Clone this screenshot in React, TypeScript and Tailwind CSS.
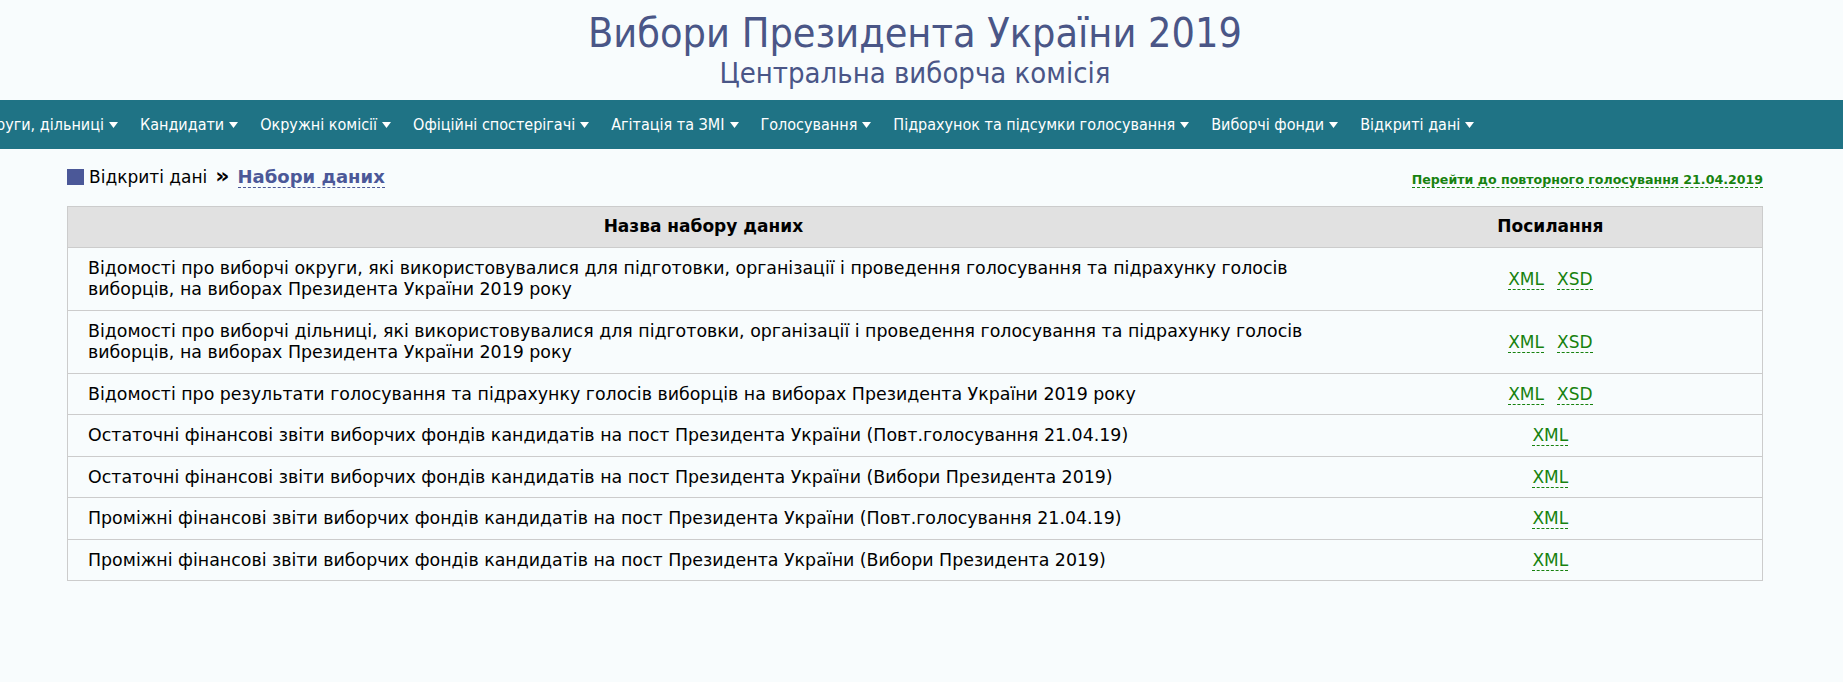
import React from 'react';

const navItems = [
  'Округи, дільниці',
  'Кандидати',
  'Окружні комісії',
  'Офіційні спостерігачі',
  'Агітація та ЗМІ',
  'Голосування',
  'Підрахунок та підсумки голосування',
  'Виборчі фонди',
  'Відкриті дані',
];

const rows: { title: string; links: string[] }[] = [
  {
    title:
      'Відомості про виборчі округи, які використовувалися для підготовки, організації і проведення голосування та підрахунку голосів виборців, на виборах Президента України 2019 року',
    links: ['XML', 'XSD'],
  },
  {
    title:
      'Відомості про виборчі дільниці, які використовувалися для підготовки, організації і проведення голосування та підрахунку голосів виборців, на виборах Президента України 2019 року',
    links: ['XML', 'XSD'],
  },
  {
    title: 'Відомості про результати голосування та підрахунку голосів виборців на виборах Президента України 2019 року',
    links: ['XML', 'XSD'],
  },
  {
    title: 'Остаточні фінансові звіти виборчих фондів кандидатів на пост Президента України (Повт.голосування 21.04.19)',
    links: ['XML'],
  },
  {
    title: 'Остаточні фінансові звіти виборчих фондів кандидатів на пост Президента України (Вибори Президента 2019)',
    links: ['XML'],
  },
  {
    title: 'Проміжні фінансові звіти виборчих фондів кандидатів на пост Президента України (Повт.голосування 21.04.19)',
    links: ['XML'],
  },
  {
    title: 'Проміжні фінансові звіти виборчих фондів кандидатів на пост Президента України (Вибори Президента 2019)',
    links: ['XML'],
  },
];

function Caret() {
  return (
    <svg width="9" height="6" viewBox="0 0 9 6" className="ml-[5px] mt-[1px]">
      <path d="M0 0 H9 L4.5 6 Z" fill="#ffffff" />
    </svg>
  );
}

export default function App() {
  return (
    <div className="min-h-[682px] w-full bg-[#f8fcfd] font-['DejaVu_Sans',Verdana,sans-serif] text-black">
      <div className="w-[1830px]">
        {/* Header */}
        <div className="flex flex-col items-center pt-[9px] h-[100px]">
          <h1 className="font-['DejaVu_Sans_Condensed',sans-serif] text-[41px] leading-[48px] text-[#4a5687]">
            Вибори Президента України 2019
          </h1>
          <h2 className="font-['DejaVu_Sans_Condensed',sans-serif] text-[29px] leading-[32px] text-[#4a5687]">
            Центральна виборча комісія
          </h2>
        </div>
      </div>

      {/* Nav */}
      <div className="h-[49px] bg-[#1f7385] overflow-hidden">
        <ul className="flex items-center h-full ml-[-24px] gap-[22px] font-['DejaVu_Sans_Condensed',sans-serif] text-[16px] text-white whitespace-nowrap">
          {navItems.map(item => (
            <li key={item} className="flex items-center">
              {item}
              <Caret />
            </li>
          ))}
        </ul>
      </div>

      <div className="w-[1830px] px-[67px]">
        {/* Breadcrumb */}
        <div className="flex items-end justify-between pt-[16px] pb-[17px]">
          <div className="flex items-center text-[17px] leading-[24px]">
            <span className="w-[17px] h-[16px] bg-[#4b5898] mr-[5px]" />
            <span>Відкриті дані</span>
            <span className="font-bold mx-[8px] text-[22px] leading-[22px] mb-[2px]">»</span>
            <span className="font-bold text-[18px] text-[#4b5898] border-b border-dashed border-[#4b5898] leading-[21px]">
              Набори даних
            </span>
          </div>
          <span className="font-bold text-[12.6px] leading-[15px] text-[#17820f] border-b border-dashed border-[#17820f] mb-[1px]">
            Перейти до повторного голосування 21.04.2019
          </span>
        </div>

        {/* Table */}
        <table className="w-full border-collapse border border-[#cccccc] text-[17.4px] leading-[21.5px]">
          <thead>
            <tr className="bg-[#e1e1e1]">
              <th className="w-3/4 py-[9px] font-bold text-[17px] text-center border-b border-[#cccccc]">Назва набору даних</th>
              <th className="w-1/4 py-[9px] font-bold text-[17px] text-center border-b border-[#cccccc]">Посилання</th>
            </tr>
          </thead>
          <tbody>
            {rows.map(row => (
              <tr key={row.title} className="border-b border-[#cccccc]">
                <td className="pt-[10px] pb-[9px] pl-[20px] pr-[10px] text-left align-middle">{row.title}</td>
                <td className="pt-[10px] pb-[9px] text-center align-middle">
                  <div className="flex justify-center gap-[13px] h-[21px]">
                    {row.links.map(l => (
                      <a key={l} className="text-[#17820f] border-b border-dashed border-[#17820f] leading-[20px] text-[17px]">
                        {l}
                      </a>
                    ))}
                  </div>
                </td>
              </tr>
            ))}
          </tbody>
        </table>
      </div>
    </div>
  );
}
